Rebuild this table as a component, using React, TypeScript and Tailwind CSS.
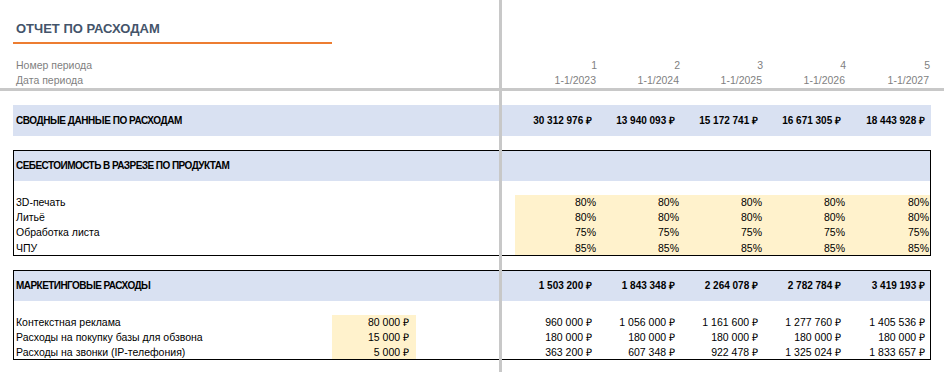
import React from 'react';

const YEAR_COLS = ['col-start-7', 'col-start-8', 'col-start-9', 'col-start-10', 'col-start-11'];

const PERIODS = ['1', '2', '3', '4', '5'];
const DATES = ['1-1/2023', '1-1/2024', '1-1/2025', '1-1/2026', '1-1/2027'];
const SUMMARY = ['30 312 976 ₽', '13 940 093 ₽', '15 172 741 ₽', '16 671 305 ₽', '18 443 928 ₽'];

const PRODUCTS = [
  { row: 'row-start-13', name: '3D-печать', share: '80%' },
  { row: 'row-start-14', name: 'Литьё', share: '80%' },
  { row: 'row-start-15', name: 'Обработка листа', share: '75%' },
  { row: 'row-start-16', name: 'ЧПУ', share: '85%' },
];

const MARKETING_TOTAL = ['1 503 200 ₽', '1 843 348 ₽', '2 264 078 ₽', '2 782 784 ₽', '3 419 193 ₽'];

const MARKETING = [
  {
    row: 'row-start-20',
    name: 'Контекстная реклама',
    input: '80 000 ₽',
    values: ['960 000 ₽', '1 056 000 ₽', '1 161 600 ₽', '1 277 760 ₽', '1 405 536 ₽'],
  },
  {
    row: 'row-start-21',
    name: 'Расходы на покупку базы для обзвона',
    input: '15 000 ₽',
    values: ['180 000 ₽', '180 000 ₽', '180 000 ₽', '180 000 ₽', '180 000 ₽'],
  },
  {
    row: 'row-start-22',
    name: 'Расходы на звонки (IP-телефония)',
    input: '5 000 ₽',
    values: ['363 200 ₽', '607 348 ₽', '922 478 ₽', '1 325 024 ₽', '1 833 657 ₽'],
  },
];

type RowProps = {
  row: string;
  label?: string;
  input?: string;
  values?: string[];
  className?: string;
  labelClass?: string;
  valueClass?: string;
};

// one spreadsheet line, laid on the page grid's columns
const Row: React.FC<RowProps> = ({ row, label, input, values = [], className = '', labelClass = '', valueClass = '' }) => (
  <div className={`${row} col-span-full grid grid-cols-subgrid grid-rows-1 items-center ${className}`}>
    {label && <div className={`row-start-1 col-start-2 pl-[3px] whitespace-nowrap ${labelClass}`}>{label}</div>}
    {input && <div className="row-start-1 col-start-3 text-right pr-[7px] whitespace-nowrap">{input}</div>}
    {values.map((v, i) => (
      <div key={i} className={`row-start-1 ${YEAR_COLS[i]} text-right whitespace-nowrap ${valueClass}`}>
        {v}
      </div>
    ))}
  </div>
);

export default function App() {
  return (
    <div
      className="grid h-[372px] w-[944px] overflow-hidden bg-white text-[10.5px] leading-none text-black grid-cols-[13px_319px_84px_83px_3px_13px_83px_83px_83px_83px_84px_1fr] grid-rows-[14px_28px_2px_14px_15px_15px_3px_14px_31px_14px_31px_14px_15px_15px_15px_16px_14px_31px_14px_15px_15px_15px_1fr]"
      style={{ fontFamily: '"Liberation Sans", Arial, sans-serif' }}
    >
      {/* title */}
      <div className="row-start-2 col-start-2 self-center pl-[3px] text-[13px] font-bold text-[#44546a] whitespace-nowrap">
        ОТЧЕТ ПО РАСХОДАМ
      </div>
      <div className="row-start-3 col-start-2 bg-[#ed7d31]" />

      {/* period header */}
      <Row row="row-start-5" label="Номер периода" values={PERIODS} className="text-[#7f7f7f]" valueClass="pr-[1px]" />
      <Row row="row-start-6" label="Дата периода" values={DATES} className="text-[#7f7f7f]" valueClass="pr-[2px]" />

      {/* frozen pane row line */}
      <div className="row-start-7 col-span-full bg-[#c8c8c8]" />

      {/* summary */}
      <div className="row-start-9 col-start-2 col-end-12 bg-[#d9e1f2]" />
      <Row
        row="row-start-9"
        label="СВОДНЫЕ ДАННЫЕ ПО РАСХОДАМ"
        values={SUMMARY}
        className="font-bold text-[10px]"
        labelClass="tracking-[-0.45px]"
        valueClass="pr-[6px]"
      />

      {/* cost by product */}
      <div className="row-start-11 col-start-2 col-end-12 bg-[#d9e1f2]" />
      <Row
        row="row-start-11"
        label="СЕБЕСТОИМОСТЬ В РАЗРЕЗЕ ПО ПРОДУКТАМ"
        className="font-bold text-[10px]"
        labelClass="tracking-[-0.55px]"
      />
      <div className="row-start-13 row-end-17 col-start-7 col-end-12 bg-[#fff2cc]" />
      {PRODUCTS.map((p) => (
        <Row key={p.name} row={p.row} label={p.name} values={Array(5).fill(p.share)} valueClass="pr-[2px]" />
      ))}
      <div className="row-start-11 row-end-17 col-start-2 col-end-12 border border-black" />

      {/* marketing */}
      <div className="row-start-18 col-start-2 col-end-12 bg-[#d9e1f2]" />
      <Row
        row="row-start-18"
        label="МАРКЕТИНГОВЫЕ РАСХОДЫ"
        values={MARKETING_TOTAL}
        className="font-bold text-[10px]"
        labelClass="tracking-[-0.55px]"
        valueClass="pr-[6px]"
      />
      <div className="row-start-20 row-end-23 col-start-3 bg-[#fff2cc]" />
      {MARKETING.map((m) => (
        <Row key={m.name} row={m.row} label={m.name} input={m.input} values={m.values} valueClass="pr-[6px]" />
      ))}
      <div className="row-start-18 row-end-23 col-start-2 col-end-12 border border-black" />

      {/* frozen pane column line */}
      <div className="row-span-full col-start-5 bg-[#c8c8c8]" />
    </div>
  );
}
